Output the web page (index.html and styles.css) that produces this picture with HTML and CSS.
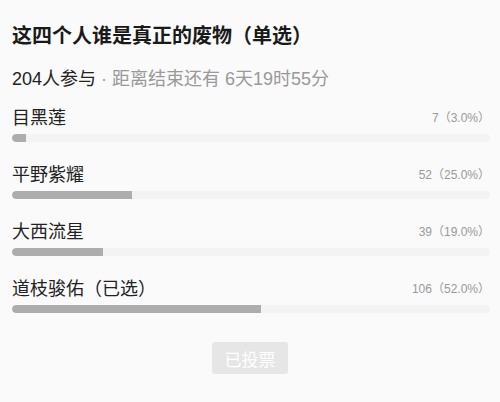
FILE: index.html
```html
<!DOCTYPE html>
<html>

<head>
  <title>投票</title>
  <link rel="stylesheet" href="styles.css">
</head>

<body>
  <div class="poll">
    <h1 class="title">这四个人谁是真正的废物（单选）</h1>
    <div class="meta"><span class="count">204人参与</span> · 距离结束还有 6天19时55分</div>

    <div class="options">
      <div class="option">
        <div class="row">
          <span class="label">目黑莲</span>
          <span class="votes">7（3.0%）</span>
        </div>
        <div class="track"><div class="fill" style="width: 3%"></div></div>
      </div>
      <div class="option">
        <div class="row">
          <span class="label">平野紫耀</span>
          <span class="votes">52（25.0%）</span>
        </div>
        <div class="track"><div class="fill" style="width: 25%"></div></div>
      </div>
      <div class="option">
        <div class="row">
          <span class="label">大西流星</span>
          <span class="votes">39（19.0%）</span>
        </div>
        <div class="track"><div class="fill" style="width: 19%"></div></div>
      </div>
      <div class="option">
        <div class="row">
          <span class="label">道枝骏佑（已选）</span>
          <span class="votes">106（52.0%）</span>
        </div>
        <div class="track"><div class="fill" style="width: 52%"></div></div>
      </div>
    </div>

    <div class="actions">
      <button class="voted" disabled>已投票</button>
    </div>
  </div>
</body>

</html>
```

FILE: styles.css
```css
body {
  margin: 0;
  background-color: #fafafa;
  font-family: "Liberation Sans", "Noto Sans CJK SC", sans-serif;
  color: #222;
}

.poll {
  padding: 24px 10px 0 12px;
}

.title {
  margin: 0;
  font-size: 20px;
  line-height: 24px;
  font-weight: bold;
  color: #1a1a1a;
}

.meta {
  margin-top: 19px;
  font-size: 18px;
  line-height: 24px;
  color: #999;
}

.meta .count {
  color: #222;
}

.options {
  margin-top: 9px;
}

.option {
  height: 57px;
}

.row {
  display: flex;
  justify-content: space-between;
  align-items: center;
  height: 24px;
  padding-top: 4px;
}

.label {
  font-size: 18px;
  color: #222;
}

.votes {
  font-size: 12px;
  color: #999;
}

.track {
  margin-top: 6px;
  height: 8px;
  background-color: #f3f3f3;
  border-radius: 4px;
  overflow: hidden;
}

.fill {
  height: 100%;
  background-color: #adadad;
  border-radius: 4px 0 0 4px;
}

.actions {
  display: flex;
  justify-content: center;
  margin-top: 14px;
  padding-right: 2px;
}

.voted {
  width: 76px;
  height: 32px;
  border: none;
  border-radius: 3px;
  background-color: #e6e6e6;
  color: #fff;
  font-family: inherit;
  font-size: 17px;
}
```
